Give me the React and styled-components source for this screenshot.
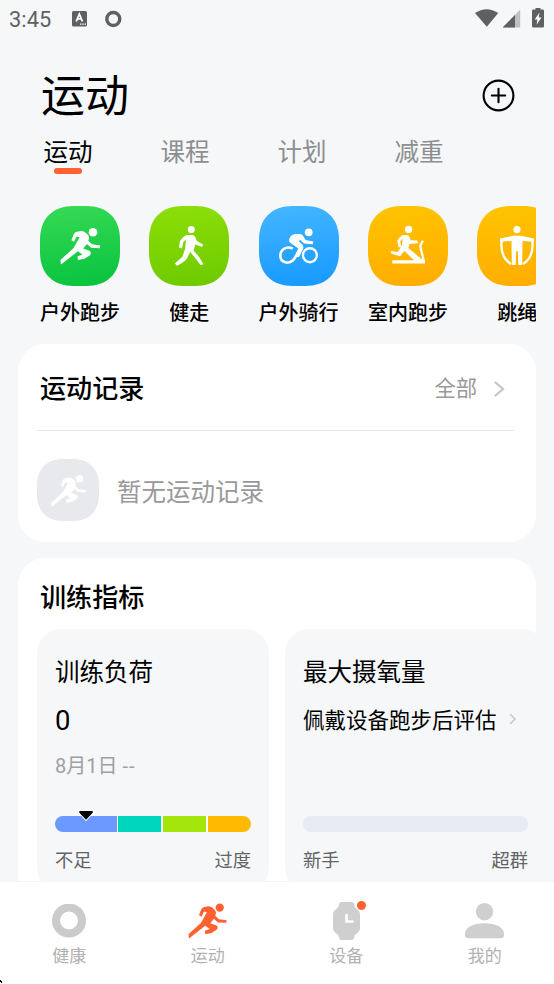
import React from "react";
import styled, { createGlobalStyle } from "styled-components";

const Global = createGlobalStyle`
  * { box-sizing: border-box; }
  body { margin: 0; background: #f6f7f9; }
`;

const Screen = styled.div`
  width: 554px;
  height: 984px;
  display: flex;
  flex-direction: column;
  overflow: hidden;
  position: relative;
  background: #f6f7f9;
  color: #000;
  font-family: Roboto, "Noto Sans CJK SC", sans-serif;
  white-space: nowrap;
  svg { display: block; flex: none; }
`;

const StatusBar = styled.header`
  height: 38px;
  flex: none;
  display: flex;
  align-items: center;
  justify-content: space-between;
  padding: 0 9px;
  color: #5f6063;
`;

const StatusGroup = styled.div`
  display: flex;
  align-items: center;
`;

const Clock = styled.span`
  font-size: 21.8px;
  line-height: 36px;
  width: 63px;
  padding-top: 2px;
  letter-spacing: 0.1px;
`;

const TitleRow = styled.div`
  height: 98px;
  flex: none;
  display: flex;
  align-items: flex-start;
  justify-content: space-between;
  padding: 28px 39px 0 41px;
  svg { margin-top: 13px; }
`;

const Title = styled.h1`
  margin: 0;
  padding-top: 1px;
  font-size: 44px;
  font-weight: 400;
  line-height: 60px;
`;

const Tabs = styled.nav`
  height: 70px;
  flex: none;
  display: flex;
  gap: 68px;
  padding: 0 43.4px;
`;

const Tab = styled.div`
  height: 38px;
  display: flex;
  flex-direction: column;
  align-items: center;
  font-size: 24.5px;
  line-height: 34px;
  color: ${(p) => (p.$active ? "#000" : "#8c8e90")};
  &::after {
    content: "";
    margin-top: -2px;
    width: 28px;
    height: 6px;
    flex: none;
    border-radius: 3px;
    background: ${(p) => (p.$active ? "#ff6230" : "transparent")};
  }
`;

const Carousel = styled.section`
  height: 138px;
  flex: none;
  display: flex;
  gap: 29.3px;
  margin-right: 18px;
  padding-left: 40px;
  overflow: hidden;
`;

const Sport = styled.div`
  width: 80px;
  flex: none;
  display: flex;
  flex-direction: column;
  align-items: center;
  gap: 12px;
  font-size: 20px;
  font-weight: 500;
  line-height: 30px;
`;

const Card = styled.section`
  height: ${(p) => p.$height}px;
  flex: none;
  margin: 0 18px 16px;
  border-radius: 27px;
  background: #fff;
  overflow: hidden;
`;

const RecordHead = styled.div`
  height: 87px;
  margin: 0 22px 0 19px;
  padding: 3px 9px 0 3px;
  display: flex;
  align-items: center;
  justify-content: space-between;
  border-bottom: 1px solid #e8e8ea;
`;

const Heading = styled.h2`
  margin: 0;
  font-size: 26.1px;
  font-weight: 500;
  line-height: 38px;
`;

const More = styled.div`
  display: flex;
  align-items: center;
  gap: 17px;
  font-size: 21.3px;
  line-height: 30px;
  color: #999;
`;

const EmptyRecord = styled.div`
  height: 118px;
  padding: 0 19px;
  display: flex;
  align-items: center;
  gap: 18px;
  font-size: 24.5px;
  color: #999;
`;

const MetricHead = styled.div`
  height: 71px;
  padding: 21px 0 0 22px;
`;

const Metrics = styled.div`
  display: flex;
  gap: 16px;
  padding-left: 19px;
`;

const Metric = styled.article`
  width: ${(p) => p.$width}px;
  height: 263px;
  flex: none;
  display: flex;
  flex-direction: column;
  padding: 27px 18px 0;
  border-radius: 24px;
  background: #f6f7f9;
`;

const MetricName = styled.div`
  font-size: 24.5px;
  line-height: 34px;
  height: 34px;
`;

const MetricValue = styled.div`
  height: 60px;
  display: flex;
  align-items: center;
  gap: 12px;
  padding-bottom: ${(p) => p.$lift || 0}px;
  font-size: ${(p) => p.$size}px;
`;

const MetricDate = styled.div`
  height: 32px;
  font-size: 20px;
  line-height: 33px;
  color: #9fa0a2;
`;

const Dashes = styled.span`
  letter-spacing: 1px;
`;

const Gauge = styled.div`
  height: 16px;
  margin-top: ${(p) => p.$top}px;
  display: flex;
  gap: 1.5px;
  border-radius: 8px;
  background: ${(p) => (p.$empty ? "#e8ebf3" : "#fff")};
  position: relative;
`;

const Segment = styled.div`
  flex: ${(p) => p.$size} 0 0;
  background: ${(p) => p.$color};
  &:first-child { border-radius: 8px 0 0 8px; }
  &:nth-child(4) { border-radius: 0 8px 8px 0; }
`;

const Pointer = styled.svg`
  position: absolute;
  left: 22px;
  top: -6px;
`;

const Range = styled.div`
  display: flex;
  justify-content: space-between;
  margin-top: 15px;
  font-size: 18.3px;
  line-height: 28px;
  color: #626366;
`;

const Content = styled.main`
  height: 537px;
  flex: none;
  overflow: hidden;
`;

const BottomNav = styled.nav`
  height: 103px;
  flex: none;
  display: grid;
  grid-template-columns: repeat(4, 1fr);
  background: #fff;
  border-top: 1px solid #f5f5f7;
`;

const NavItem = styled.div`
  display: flex;
  flex-direction: column;
  align-items: center;
  padding-top: 19px;
  gap: 3px;
  font-size: 17px;
  line-height: 24px;
  color: #b1b1b1;
`;

const IconBox = styled.div`
  height: 40px;
  display: flex;
  align-items: center;
  justify-content: center;
  position: relative;
`;

const Badge = styled.span`
  position: absolute;
  top: -0.5px;
  right: -6.5px;
  width: 9px;
  height: 9px;
  border-radius: 50%;
  background: #ff6230;
`;

const PointerTip = styled.svg`
  position: absolute;
  left: 0;
  bottom: 0;
`;

const Runner = () => (
  <>
    <circle cx="53" cy="26.3" r="4.3" />
    <path d="M31.4 34.3L33.6 28.4Q34.5 26.2 36.8 25.7L41.3 25Q44.5 25.2 47.2 28Q49.8 30.4 48.8 33.3L48.3 34.8L52.2 38.3L60.2 39.4L59.8 42.2L51.2 41.7L47 38L43.1 42.6L49 44.6Q52.2 46.2 50 49.2L44.5 52.8L37.9 54.1L37.5 50.3L42.6 48.7L37.9 45.3L21 58.6Q20.3 56 20.7 53.7L33.6 42L39.6 31.2L36.6 30.4L34.1 35.7Z" />
  </>
);

const Walker = () => (
  <>
    <circle cx="42.3" cy="23.4" r="3.5" />
    <path d="M37.5 29H43Q45.4 29 46.2 31L47.8 35L54.1 38.4L53.2 41.1L46.4 38.4L44.5 44.5L49.6 50.3L54.5 58.2L51.5 59L47.5 53.5L41.2 46L38 52.4Q34.5 56.8 27.8 59.8L25.9 57.4L33.4 50.7L36.2 42.5L36.9 33.2L34.2 36.3L33.1 42.4L29.9 41.6L31 34.9Q33 31 37.5 29Z" />
  </>
);

const Cyclist = () => (
  <>
    <circle cx="49.7" cy="26.3" r="3.9" />
    <circle cx="50.9" cy="49.2" r="7" fill="none" stroke="#fff" strokeWidth="2.4" />
    <path d="M33.8 42.6C27 39.5 21.3 44 21.3 49.8C21.3 56.3 29 58.7 34 54.3C37 51.5 38.7 45.5 41.3 42" fill="none" stroke="#fff" strokeWidth="2.6" />
    <path d="M30.2 33Q31.8 28.5 36.5 28H41.2Q43.5 28.2 44.5 30.5L46.6 34L54.3 35.5L53.9 38.2L45 37.5L41.4 34L39.6 35L43.4 38.5Q45 40.5 43.9 43.5L40 51L36.5 51L39.3 42.4L32 37.3Q29.3 35.5 30.2 33Z" />
  </>
);

const Treadmill = () => (
  <>
    <circle cx="40.6" cy="23.4" r="3.6" />
    <path d="M35 29H39Q41.2 29.2 41.8 31.5L42.6 34.2L49.3 34.4L50 37.2L41.5 38L40.4 42L55 54.3H57V57.4H24.3V54.3H46L36.5 45L32 50.3L23.5 47.8L22.6 44.9L30 46L34 39L34.8 32.8L32.2 35.5L33.2 41L30.6 41.3L29.2 34.7Q31 30.8 35 29Z" />
    <path d="M54.8 34.8L52.2 40L56 56" fill="none" stroke="#fff" strokeWidth="2.3" />
  </>
);

const Rope = () => (
  <>
    <circle cx="40" cy="23.6" r="3.6" />
    <path d="M36 29.8H44L57 32.6V35.7L45.5 35L45.2 59H41.3L40.8 45H39.2L38.7 59H34.8L34.5 35L23 35.7V32.6Z" />
    <path d="M24.8 34C23.3 45 26 53 34 58M55.2 34C56.7 45 54 53 46 58" fill="none" stroke="#fff" strokeWidth="2.3" />
  </>
);

const Tile = ({ id, from, to, size = 80, children }) => (
  <svg width={size} height={size} viewBox="0 0 80 80" fill="#fff">
    <defs>
      <linearGradient id={id} x1="0" y1="0" x2="0.1" y2="1">
        <stop stopColor={from} />
        <stop offset="1" stopColor={to} />
      </linearGradient>
    </defs>
    <path
      fill={`url(#${id})`}
      d="M0 34C0 12.5 12.5 0 34 0H46C67.5 0 80 12.5 80 34V46C80 67.5 67.5 80 46 80H34C12.5 80 0 67.5 0 46Z"
    />
    {children}
  </svg>
);

const Chevron = ({ w, h, color, stroke }) => (
  <svg width={w} height={h} viewBox={`0 0 ${w} ${h}`} fill="none" stroke={color} strokeWidth={stroke} strokeLinecap="round">
    <path d={`M1.5 1.5L${w - 2} ${h / 2}L1.5 ${h - 1.5}`} />
  </svg>
);

const sports = [
  { name: "户外跑步", from: "#36da55", to: "#0bc440", art: <Runner /> },
  { name: "健走", from: "#8ddf08", to: "#6fcb00", art: <Walker /> },
  { name: "户外骑行", from: "#45b6ff", to: "#199bff", art: <Cyclist /> },
  { name: "室内跑步", from: "#ffc400", to: "#ffae00", art: <Treadmill /> },
  { name: "跳绳", from: "#ffc400", to: "#ffae00", art: <Rope /> },
];

const levels = [
  { color: "#6b99ff", size: 62 },
  { color: "#00d6bd", size: 43.5 },
  { color: "#a4e60b", size: 43.5 },
  { color: "#ffb900", size: 43.5 },
];

export default function App() {
  return (
    <Screen>
      <Global />
      <StatusBar>
        <StatusGroup>
          <Clock>3:45</Clock>
          <svg width="50" height="18" viewBox="0 0 50 18">
            <rect x="0" y="1" width="15" height="15.5" rx="1.5" fill="#5f6063" />
            <path d="M4.2 11.5L7.3 4L10.4 11.5M5.4 8.9H9.2" fill="none" stroke="#fff" strokeWidth="1.8" />
            <path d="M8 14.2H14" stroke="#fff" strokeWidth="1.2" strokeDasharray="1.4 0.9" />
            <circle cx="41.3" cy="9" r="6.5" fill="none" stroke="#5f6063" strokeWidth="3.4" />
          </svg>
        </StatusGroup>
        <svg width="70" height="22" viewBox="0 0 70 22" fill="#5f6063">
          <path d="M0 5Q11.5-2.7 23.3 5L11.8 18.8Z" />
          <path d="M45.2 1.5V19.5H28Z" fill="#bfc0c2" />
          <path d="M40 7V19.5H28V18.9Z" />
          <path d="M60.5 1.4V0H65.5V1.4H67.7Q69 1.4 69 2.7V18.3Q69 19.5 67.7 19.5H58.3Q57 19.5 57 18.3V2.7Q57 1.4 58.3 1.4Z" />
          <path d="M64.5 4.6L59.7 11.6H62.4L61.6 16.8L66.5 9.6H63.7Z" fill="#fff" />
        </svg>
      </StatusBar>

      <TitleRow>
        <Title>运动</Title>
        <svg width="33" height="33" viewBox="0 0 33 33" fill="none" stroke="#000" strokeWidth="2.1" strokeLinecap="round">
          <circle cx="16.5" cy="16.5" r="14.9" />
          <path d="M9.8 16.5H23.2M16.5 9.8V23.2" />
        </svg>
      </TitleRow>

      <Tabs>
        <Tab $active>运动</Tab>
        <Tab>课程</Tab>
        <Tab>计划</Tab>
        <Tab>减重</Tab>
      </Tabs>

      <Carousel>
        {sports.map((s, i) => (
          <Sport key={s.name}>
            <Tile id={`sport${i}`} from={s.from} to={s.to}>{s.art}</Tile>
            {s.name}
          </Sport>
        ))}
      </Carousel>

      <Content>
        <Card $height={198}>
          <RecordHead>
            <Heading>运动记录</Heading>
            <More>
              全部
              <Chevron w={11} h={16} color="#c4c4c6" stroke={2.2} />
            </More>
          </RecordHead>
          <EmptyRecord>
            <Tile id="empty" from="#e8e9ed" to="#e8e9ed" size={62}>
              <g transform="translate(-4.5 -4) scale(1.12)"><Runner /></g>
            </Tile>
            暂无运动记录
          </EmptyRecord>
        </Card>

        <Card $height={360}>
          <MetricHead>
            <Heading>训练指标</Heading>
          </MetricHead>
          <Metrics>
            <Metric $width={232}>
              <MetricName>训练负荷</MetricName>
              <MetricValue $size={27.5}>0</MetricValue>
              <MetricDate>8月1日 <Dashes>--</Dashes></MetricDate>
              <Gauge $top={34}>
                {levels.map((l) => (
                  <Segment key={l.color} $color={l.color} $size={l.size} />
                ))}
                <Pointer width="18" height="12" viewBox="0 0 18 12">
                  <path d="M2.3 1H15.7V3L9 10.2L2.3 3Z" stroke="#fff" strokeWidth="1.6" />
                  <path d="M2.3 1H15.7V2.8L9 9.8L2.3 2.8Z" />
                </Pointer>
              </Gauge>
              <Range><span>不足</span><span>过度</span></Range>
            </Metric>
            <Metric $width={261}>
              <MetricName>最大摄氧量</MetricName>
              <MetricValue $size={21.5} $lift={3}>
                佩戴设备跑步后评估
                <Chevron w={8} h={12} color="#c8c9cb" stroke={1.7} />
              </MetricValue>
              <Gauge $top={66} $empty />
              <Range><span>新手</span><span>超群</span></Range>
            </Metric>
          </Metrics>
        </Card>
      </Content>

      <BottomNav>
        <NavItem>
          <IconBox>
            <svg width="34" height="34" viewBox="0 0 34 34">
              <circle cx="17" cy="16.5" r="13" fill="none" stroke="#cbcbcb" strokeWidth="8" />
            </svg>
          </IconBox>
          健康
        </NavItem>
        <NavItem>
          <IconBox>
            <svg width="39" height="36" viewBox="20 21.5 40.5 37.5" fill="#ff6230"><Runner /></svg>
          </IconBox>
          运动
        </NavItem>
        <NavItem>
          <IconBox>
            <svg width="27" height="38" viewBox="0 0 27 38">
              <path d="M8.5 0H18.5Q20.8 0 21 2L21.8 5.2L25.5 8.5Q27 10 27 12V26Q27 28.5 25.5 30L21.8 33L21 36Q20.5 38 18.5 38H8.5Q6.5 38 6 36L5.2 33L1.5 30Q0 28.5 0 26V12Q0 10 1.5 8.5L5.2 5.2L6 2Q6.5 0 8.5 0Z" fill="#cfcfcf" />
              <path d="M13.5 13V19.5H19.5" fill="none" stroke="#fff" strokeWidth="2.6" strokeLinecap="round" />
            </svg>
            <Badge />
          </IconBox>
          设备
        </NavItem>
        <NavItem>
          <IconBox>
            <svg width="39" height="36" viewBox="0 0 39 36" fill="#cfcfcf">
              <circle cx="19.5" cy="8.7" r="8.7" />
              <path d="M0 32V31C0 24.5 8 20.3 19.5 20.3S39 24.5 39 31V32Q39 35.2 35.5 35.2H3.5Q0 35.2 0 32Z" />
            </svg>
          </IconBox>
          我的
        </NavItem>
      </BottomNav>
      <PointerTip width="3" height="4" viewBox="0 0 3 4">
        <path d="M0 0H1V1H2V3H1V2H0Z" />
      </PointerTip>
    </Screen>
  );
}
